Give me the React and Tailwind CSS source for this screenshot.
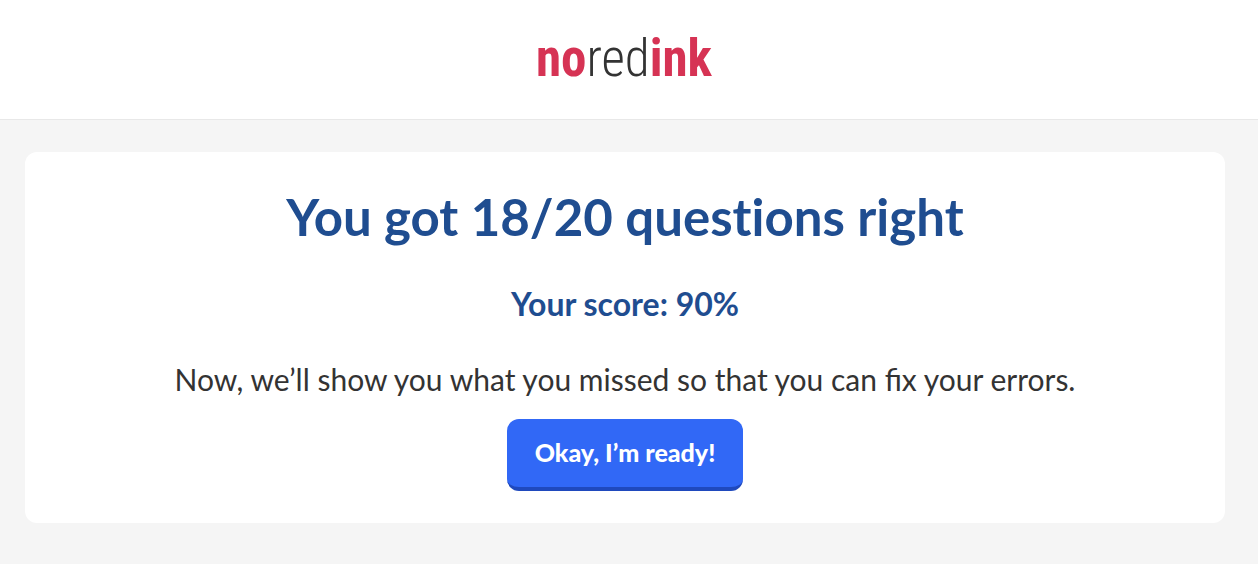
import React from "react";

// Wordmark in the page header
const Logo = () => (
  <a
    href="#"
    aria-label="noredink"
    className="font-['Roboto_Condensed','Roboto',sans-serif] text-[51px] leading-[60px] text-[#333333]"
  >
    <span className="font-bold text-[#d63354]">no</span>
    <span className="font-light">red</span>
    <span className="font-bold text-[#d63354]">ink</span>
  </a>
);

const ScoreCard = ({ correct, total }) => {
  const score = Math.round((correct / total) * 100);

  return (
    <section className="flex flex-col items-center rounded-xl bg-white px-6 pt-8 pb-8 text-center">
      <h1 className="text-[51px] leading-[66px] font-bold text-[#1f4d90] [font-variant-ligatures:none]">
        {`You got ${correct}/${total} questions right`}
      </h1>
      <h2 className="mt-[34px] text-[32px] leading-10 font-bold text-[#1f4d90]">
        {`Your score: ${score}%`}
      </h2>
      <p className="mt-8 text-[30px] leading-[47px] text-[#333333]">
        Now, we’ll show you what you missed so that you can fix your errors.
      </p>
      <button
        type="button"
        className="mt-4 h-18 cursor-pointer rounded-xl border-b-4 border-[#1f49bd] bg-[#3168f6] px-7 text-[25px] font-black text-white"
      >
        Okay, I’m ready!
      </button>
    </section>
  );
};

export default function App() {
  return (
    <div className="min-h-screen bg-[#f5f5f5] font-['Lato',sans-serif]">
      <header className="flex h-30 items-center justify-center border-b border-[#e8e8e8] bg-white pr-[10px] pb-[2px]">
        <Logo />
      </header>
      <main className="py-8 pr-[33px] pl-[25px]">
        <ScoreCard correct={18} total={20} />
      </main>
    </div>
  );
}
